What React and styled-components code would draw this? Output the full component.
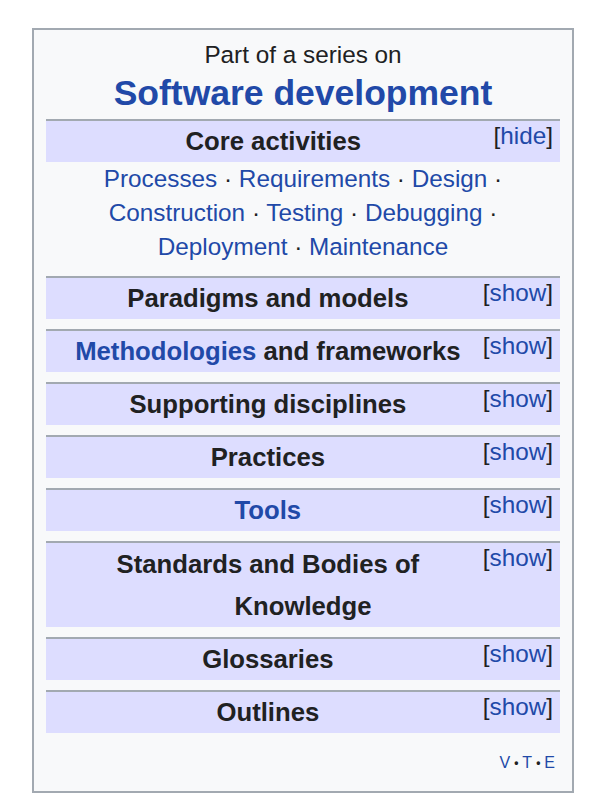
import React from 'react';
import styled, { createGlobalStyle } from 'styled-components';

const GlobalStyle = createGlobalStyle`
  body {
    margin: 0;
    background: #fff;
    font-family: "Liberation Sans", Arial, sans-serif;
    color: #202122;
  }
`;

const Page = styled.div`
  padding: 28px 0 0 32px;
`;

const Sidebar = styled.div`
  box-sizing: border-box;
  width: 542px;
  border: 2px solid #a2a9b1;
  background: #f8f9fa;
  padding: 11px 12px 0;
`;

const Above = styled.div`
  text-align: center;
  font-size: 24.3px;
  line-height: 27px;
`;

const Title = styled.div`
  text-align: center;
  font-size: 35.5px;
  font-weight: bold;
  line-height: 51px;
  color: #2149a8;
`;

const Section = styled.div`
  border-top: 2px solid #a2a9b1;
  margin-bottom: 10px;
`;

// the toggle floats right, so only the first line of the title makes room for it
const Bar = styled.div`
  background: #ddf;
  padding: 0 7px;
  text-align: center;
  font-size: 25.7px;
  font-weight: bold;
  line-height: ${(props) => (props.wrapped ? '42px' : '41px')};
  color: #202122;
`;

const BarLink = styled.span`
  color: #2149a8;
`;

const Toggle = styled.span`
  float: right;
  font-size: 24.3px;
  font-weight: normal;
  line-height: 30px;
  white-space: nowrap;
  span {
    color: #2149a8;
  }
`;

const List = styled.div`
  text-align: center;
  font-size: 24.3px;
  line-height: 34px;
  padding: 0 20px 2px;
  color: #202122;
`;

const ListLink = styled.span`
  color: #2149a8;
`;

const Navbar = styled.div`
  display: flex;
  justify-content: flex-end;
  align-items: center;
  gap: 4px;
  font-size: 16px;
  line-height: 24px;
  padding: 8px 5px 16px 0;
  color: #2149a8;
`;

const Dot = styled.span`
  color: #202122;
  font-size: 12px;
  font-weight: bold;
`;

const core = [
  'Processes',
  'Requirements',
  'Design',
  'Construction',
  'Testing',
  'Debugging',
  'Deployment',
  'Maintenance',
];

const sections = [
  { title: 'Paradigms and models' },
  { link: 'Methodologies', title: ' and frameworks' },
  { title: 'Supporting disciplines' },
  { title: 'Practices' },
  { link: 'Tools' },
  { title: 'Standards and Bodies of Knowledge', wrapped: true },
  { title: 'Glossaries' },
  { title: 'Outlines' },
];

const ToggleLink = ({ label }) => (
  <Toggle>
    [<span>{label}</span>]
  </Toggle>
);

const App = () => {
  return (
    <Page>
      <GlobalStyle />
      <Sidebar>
        <Above>Part of a series on</Above>
        <Title>Software development</Title>

        <Section>
          <Bar>
            <ToggleLink label="hide" />
            Core activities
          </Bar>
          <List>
            {core.map((item, i) => (
              <React.Fragment key={item}>
                <ListLink>{item}</ListLink>
                {i < core.length - 1 ? ' · ' : ''}
              </React.Fragment>
            ))}
          </List>
        </Section>

        {sections.map((s, i) => (
          <Section key={i}>
            <Bar wrapped={s.wrapped}>
              <ToggleLink label="show" />
              {s.link && <BarLink>{s.link}</BarLink>}
              {s.title}
            </Bar>
          </Section>
        ))}

        <Navbar>
          <span>V</span>
          <Dot>•</Dot>
          <span>T</span>
          <Dot>•</Dot>
          <span>E</span>
        </Navbar>
      </Sidebar>
    </Page>
  );
};

export default App;
